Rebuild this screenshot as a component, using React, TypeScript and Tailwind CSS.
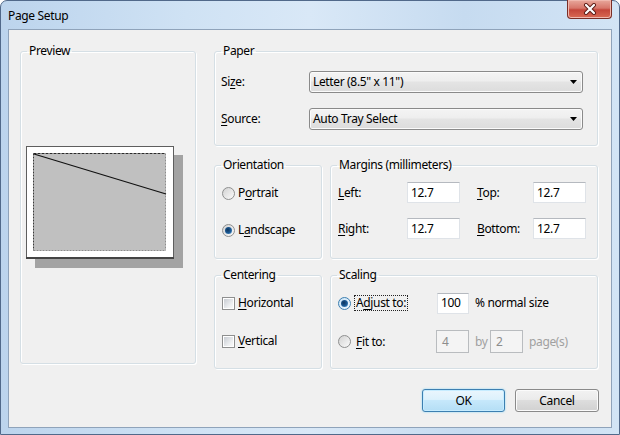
import React from "react";

const U = ({ children }: { children: React.ReactNode }) => (
  <span className="underline decoration-1 underline-offset-[2px]">{children}</span>
);

function Radio({ checked, focus }: { checked?: boolean; focus?: boolean }) {
  return (
    <span
      className={
        focus
          ? "flex h-[13px] w-[13px] shrink-0 items-center justify-center rounded-full border border-[#3c7fb1] bg-[linear-gradient(135deg,#c9e3f6_0%,#f4faff_100%)]"
          : "flex h-[13px] w-[13px] shrink-0 items-center justify-center rounded-full border border-[#8e8f8f] bg-[linear-gradient(135deg,#d2d2d2_0%,#fbfbfb_100%)]"
      }
    >
      {checked && (
        <span className="h-[7px] w-[7px] rounded-full bg-[radial-gradient(circle_at_40%_40%,#0d355e_0%,#1d5c98_55%,#6fb4e4_100%)]" />
      )}
    </span>
  );
}

function Check() {
  return (
    <span className="flex h-[13px] w-[13px] shrink-0 items-center justify-center border border-[#8e8f8f] bg-white">
      <span className="h-[9px] w-[9px] bg-[linear-gradient(135deg,#c8ccd2_0%,#eef0f2_70%,#f8f8f8_100%)]" />
    </span>
  );
}

function Group({
  title,
  className,
  children,
}: {
  title: string;
  className: string;
  children?: React.ReactNode;
}) {
  return (
    <fieldset className={"m-0 min-w-0 rounded-[3px] border border-[#d5dfe5] p-0 shadow-[inset_1px_1px_0_#ffffff,1px_1px_0_#ffffff] " + className}>
      <legend className="ml-[6px] px-[2px] leading-[14px]">{title}</legend>
      {children}
    </fieldset>
  );
}

function Combo({ text }: { text: string }) {
  return (
    <div className="flex h-[22px] w-[274px] items-center justify-between rounded-[3px] border border-[#8a8a8a] bg-[linear-gradient(180deg,#f4f4f4_0%,#eeeeee_45%,#e4e4e4_50%,#dcdcdc_100%)] pl-[3px] pr-[5px] shadow-[inset_0_0_0_1px_#fbfbfb]">
      <span className="leading-[16px]">{text}</span>
      <svg width="7" height="4" viewBox="0 0 7 4">
        <path d="M0 0H7L3.5 4Z" fill="#000" />
      </svg>
    </div>
  );
}

function TextBox({ value, w }: { value: string; w: string }) {
  return (
    <div className={"flex h-[21px] items-center border border-[#dfe3e8] border-t-[#b5b9bf] bg-white pl-[3px] " + w}>
      {value}
    </div>
  );
}

function DisabledBox({ value }: { value: string }) {
  return (
    <div className="flex h-[23px] w-[33px] items-center border border-[#b9bcbf] bg-[#f4f4f4] pl-[5px] text-[#8d8d8d]">
      {value}
    </div>
  );
}

export default function App() {
  return (
    <div className="flex h-[435px] w-[620px] flex-col rounded-t-[7px] border border-[#51698a] bg-[linear-gradient(90deg,#bcd4ed_0%,#cfe2f4_30%,#d9e8f7_50%,#c6dbf0_75%,#d2e4f5_100%)] px-[7px] pb-[6px] font-['Noto_Sans',sans-serif] text-[12px] tracking-[-0.35px] text-black">
      {/* title bar */}
      <div className="flex h-[28px] items-start justify-between">
        <span className="mt-[7px] leading-[16px]">Page Setup</span>
        <div className="-mt-[1px] flex h-[19px] w-[45px] items-center justify-center rounded-b-[4px] border border-t-0 border-[#7a2e26] bg-[linear-gradient(180deg,#e8a89c_0%,#d7766a_45%,#c4463a_55%,#d96a54_100%)] shadow-[inset_0_0_0_1px_#f0b8ae]">
          <svg width="14" height="12" viewBox="0 0 14 12">
            <path d="M3 2L11 10M11 2L3 10" stroke="#5b1a14" strokeWidth="4" strokeLinecap="round" />
            <path d="M3 2L11 10M11 2L3 10" stroke="#ffffff" strokeWidth="2.2" strokeLinecap="round" />
          </svg>
        </div>
      </div>

      {/* client area */}
      <div className="flex flex-1 flex-col border border-[#8fa3ba] bg-[#f0f0f0] pl-[11px] pt-[14px]">
        <div className="flex items-start gap-[18px]">
          {/* Preview */}
          <Group title="Preview" className="h-[320px] w-[176px]">
            <div className="ml-[5px] mt-[88px]">
              <svg width="158" height="123" viewBox="0 0 158 123">
                <rect x="9" y="9" width="148" height="113" fill="#a3a3a3" />
                <rect x="0.5" y="0.5" width="147" height="112" fill="#ffffff" stroke="#5e5e5e" />
                <line x1="0" y1="112" x2="148" y2="112" stroke="#444" strokeWidth="2" />
                <rect x="7.5" y="7.5" width="132" height="97" fill="#c0c0c0" />
                <line x1="7.5" y1="7.5" x2="139.5" y2="7.5" stroke="#2a2a2a" strokeDasharray="3 1" />
                <line x1="7.5" y1="7.5" x2="7.5" y2="104.5" stroke="#3a3a3a" strokeDasharray="2 1" />
                <line x1="139.5" y1="7.5" x2="139.5" y2="104.5" stroke="#8c8c8c" strokeDasharray="2 1" />
                <line x1="7.5" y1="104.5" x2="139.5" y2="104.5" stroke="#8c8c8c" strokeDasharray="2 1" />
                <line x1="8" y1="8" x2="140" y2="48" stroke="#111" strokeWidth="1.2" />
              </svg>
            </div>
          </Group>

          {/* right column */}
          <div className="flex w-[384px] flex-col">
            <Group title="Paper" className="h-[102px] w-[384px]">
              <div className="mt-[13px] flex h-[22px] items-center pl-[6px]">
                <span className="w-[88px]">
                  Si<U>z</U>e:
                </span>
                <Combo text={'Letter (8.5" x 11")'} />
              </div>
              <div className="mt-[15px] flex h-[22px] items-center pl-[6px]">
                <span className="w-[88px]">
                  <U>S</U>ource:
                </span>
                <Combo text="Auto Tray Select" />
              </div>
            </Group>

            <div className="mt-[12px] flex gap-[8px]">
              <Group title="Orientation" className="h-[101px] w-[108px]">
                <div className="mt-[10px] flex h-[22px] items-center gap-[3px] pl-[7px]">
                  <Radio />
                  <span>
                    P<U>o</U>rtrait
                  </span>
                </div>
                <div className="mt-[15px] flex h-[22px] items-center gap-[3px] pl-[7px]">
                  <Radio checked />
                  <span>
                    L<U>a</U>ndscape
                  </span>
                </div>
              </Group>

              <Group title="Margins (millimeters)" className="h-[101px] w-[268px]">
                <div className="mt-[10px] flex h-[21px] items-center pl-[7px]">
                  <span className="w-[69px]">
                    <U>L</U>eft:
                  </span>
                  <TextBox value="12.7" w="w-[53px]" />
                  <span className="ml-[17px] w-[56px]">
                    <U>T</U>op:
                  </span>
                  <TextBox value="12.7" w="w-[53px]" />
                </div>
                <div className="mt-[15px] flex h-[21px] items-center pl-[7px]">
                  <span className="w-[69px]">
                    <U>R</U>ight:
                  </span>
                  <TextBox value="12.7" w="w-[53px]" />
                  <span className="ml-[17px] w-[56px]">
                    <U>B</U>ottom:
                  </span>
                  <TextBox value="12.7" w="w-[53px]" />
                </div>
              </Group>
            </div>

            <div className="mt-[9px] flex gap-[8px]">
              <Group title="Centering" className="h-[101px] w-[108px]">
                <div className="mt-[10px] flex h-[22px] items-center gap-[3px] pl-[7px]">
                  <Check />
                  <span>
                    <U>H</U>orizontal
                  </span>
                </div>
                <div className="mt-[16px] flex h-[22px] items-center gap-[3px] pl-[7px]">
                  <Check />
                  <span>
                    <U>V</U>ertical
                  </span>
                </div>
              </Group>

              <Group title="Scaling" className="h-[101px] w-[268px]">
                <div className="mt-[10px] flex h-[22px] items-center pl-[7px]">
                  <Radio checked focus />
                  <div className="w-[86px] pl-[3px]">
                    <span className="inline-block border border-dotted border-[#222] px-[1px] leading-[14px]">
                      A<U>d</U>just to:
                    </span>
                  </div>
                  <TextBox value="100" w="w-[32px]" />
                  <span className="ml-[6px]">% normal size</span>
                </div>
                <div className="mt-[16px] flex h-[23px] items-center pl-[7px]">
                  <Radio />
                  <span className="w-[85px] pl-[5px]">
                    <U>F</U>it to:
                  </span>
                  <DisabledBox value="4" />
                  <span className="ml-[6px] w-[15px] text-[#a0a0a0]">by</span>
                  <DisabledBox value="2" />
                  <span className="ml-[6px] text-[#a0a0a0]">page(s)</span>
                </div>
              </Group>
            </div>
          </div>
        </div>

        {/* buttons */}
        <div className="mt-[20px] flex justify-end gap-[10px] pr-[12px]">
          <div className="flex h-[23px] w-[83px] items-center justify-center rounded-[3px] border border-[#3c7fb1] bg-[linear-gradient(180deg,#eaf6fd_0%,#dcf1fc_45%,#c6e8fb_50%,#b4def5_100%)] shadow-[inset_0_0_0_1px_#c6ecff,0_0_2px_#7fd3f5]">
            OK
          </div>
          <div className="flex h-[23px] w-[84px] items-center justify-center rounded-[3px] border border-[#8a8a8a] bg-[linear-gradient(180deg,#f2f2f2_0%,#ebebeb_45%,#dddddd_50%,#d1d1d1_100%)] shadow-[inset_0_0_0_1px_#fbfbfb]">
            Cancel
          </div>
        </div>
      </div>
    </div>
  );
}
